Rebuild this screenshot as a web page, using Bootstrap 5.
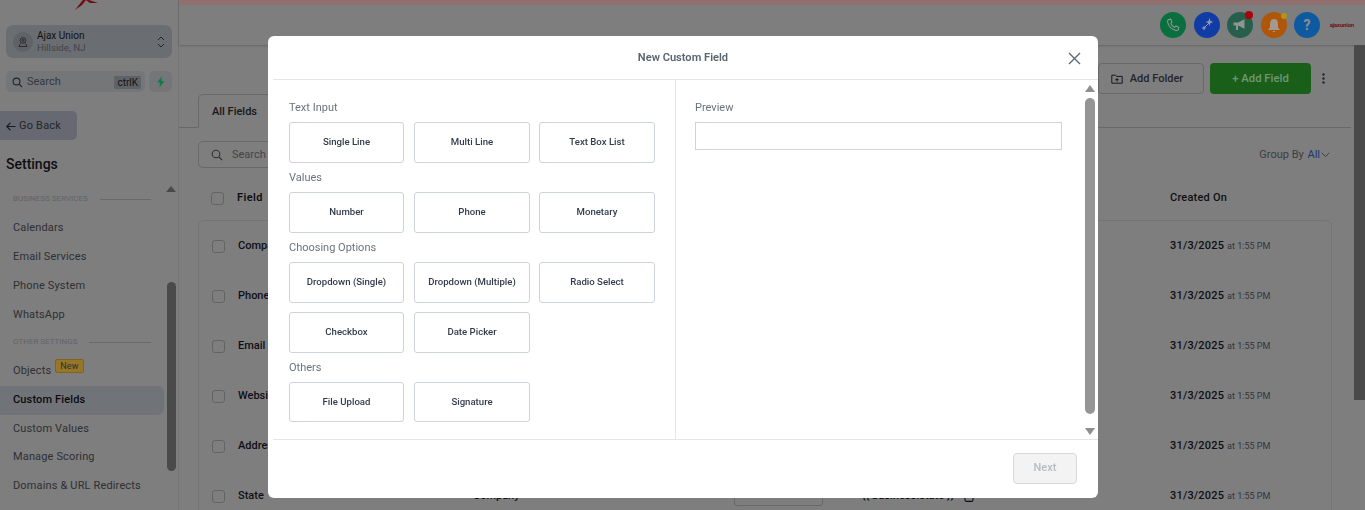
<!DOCTYPE html>
<html lang="en">
<head>
<meta charset="utf-8">
<title>New Custom Field</title>
<link rel="stylesheet" href="https://cdn.jsdelivr.net/npm/bootstrap@5.3.0/dist/css/bootstrap.min.css">
<style>
html,body{height:510px;overflow:hidden}
body{font-family:Roboto,"Liberation Sans",sans-serif;background:#b5b5b5;color:#1c1c22;font-size:11px}
.shell{height:510px;overflow:hidden}
.side{width:179px;flex:none;border-right:1px solid #a8a8a8;padding-top:25px;position:relative;height:510px;overflow:hidden}
.logo-mark{position:absolute;left:74px;top:0}
.org-box{margin:0 6px;height:33px;border-radius:7px;background:#999da3;padding:0 7px}
.org-ava{width:20px;height:20px;border-radius:50%;background:#888d93;flex:none}
.org-name{font-size:10px;line-height:12px;color:#15151a;font-weight:400}
.org-loc{font-size:9.7px;line-height:12px;color:#5f6368}
.find-row{margin:13px 6px 0;gap:4px;height:21px}
.find-box{flex:1;background:#a7aaad;border-radius:5px;padding:1px 4px 0 6px;color:#4e5156;font-size:11px}
.key-hint{background:#888d93;color:#1c1c22;font-size:10px;padding:0 3px;line-height:13px;border-radius:1px}
.bolt-box{width:23px;background:#a7aaad;border-radius:5px}
.back-btn{width:77px;height:29px;margin-top:19px;background:#9397a3;border-radius:0 5px 5px 0;padding:1px 0 0 6px;gap:3px;color:#33353c;font-size:11px;letter-spacing:.2px}
.set-title{font-size:14px;font-weight:500;line-height:18px;margin:15px 0 0 6px;color:#15151a}
.sec-label{font-size:8px;line-height:10px;color:#8b8f98;padding-left:13px;gap:12px;height:10px;margin-right:27px;white-space:nowrap}
.sec-label i{flex:1;height:1px;background:#999}
.sec-one{margin-top:21px;margin-bottom:10px}
.sec-two{margin-top:7px;margin-bottom:10px}
.nav-row{height:29px;padding-left:13px;font-size:11px;color:#43454b;width:164px;border-radius:0 6px 6px 0;white-space:nowrap;letter-spacing:.15px}
.nav-now{background:#a1a6ae;color:#111;font-weight:500}
.nav-snug{margin-top:-1px}
.new-tag{font-size:9px;line-height:12px;background:#d6ab39;border:1px solid #b89028;border-radius:2px;color:#444;padding:0 4px;margin:-12px 0 0 4px}
.bar-thumb{position:absolute;left:167px;top:282px;width:9px;height:189px;border-radius:5px;background:#6b6b6b}
.bar-up{position:absolute;left:166px;top:186px;width:0;height:0;border:5px solid transparent;border-top:0;border-bottom:6px solid #6b6b6b}
.work{flex:1;min-width:0;position:relative;height:510px}
.top-head{height:45px;box-shadow:0 1px 2px rgba(0,0,0,.2);position:relative}
.pink-strip{height:5px;background:#ce9fa0}
.circ-row{gap:7.5px;position:absolute;right:45px;top:12px}
.circ{width:26px;height:26px;border-radius:50%;position:relative}
.circ-g{background:#0e9f5a}.circ-b{background:#1857ec}.circ-t{background:#38896f}.circ-o{background:#fb7b0e}.circ-h{background:#1581e5;color:#ccc;font-weight:700;font-size:14px}
.dot-r,.dot-y{position:absolute;border-radius:50%;width:8px;height:8px;top:-1px;right:0}
.dot-r{background:#f3000e}.dot-y{background:#ffd61d;width:6px;height:6px;top:1px}
.brand-mini{position:absolute;right:11px;top:21px;color:#a01828;font-size:6px;font-weight:700;line-height:8px;letter-spacing:-.2px}
.tool-row{height:83px;margin-right:14px;padding-left:19px;border-bottom:1px solid #959595}
.tab-on{width:73px;height:34px;align-self:flex-end;margin-bottom:-1px;padding-top:3px;border:1px solid #959595;border-bottom-color:#b5b5b5;border-radius:5px 5px 0 0;font-weight:500;font-size:11px;background:#b5b5b5;color:#22242a}
.act-row{margin:18px 21px 0 auto;gap:6px;height:31px}
.act-folder{height:31px;width:106px;border:1px solid #959595;border-radius:4px;font-size:11px;font-weight:500;color:#33353c;gap:7px;padding:1px 8px 0 0}
.act-add{height:31px;width:101px;border-radius:4px;background:#258825;color:#a0d8a8;font-size:11.3px;font-weight:500;padding-top:1px}
.act-more{width:13px;color:#33353c}
.filter-row{padding:13px 35px 0 19px;height:41px}
.seek-box{width:200px;height:27px;border:1px solid #959595;border-radius:5px;color:#5f6368;gap:9px;padding:1px 0 0 12px}
.group-by{color:#55585e;font-size:11px;gap:1px;margin-left:auto}
.group-by b{font-weight:400;color:#2b4fa8}
.head-row{padding:7px 33px 0 32px;height:51px;font-weight:600;font-size:11px;letter-spacing:.4px;color:#16161c}
.head-row .c-date{width:162px}
.tick{width:13px;height:13px;border:1px solid #8f8f8f;border-radius:3px;flex:none}
.head-row .tick{margin:0 13px 0 0}
.rows-card{margin:0 33px 0 19px;border:1px solid #a6a6a6;border-radius:6px 6px 0 0;height:300px}
.body-row{height:50px;padding-left:13px;font-size:11px;font-weight:500;color:#15151f}
.body-row .tick{margin-right:13px}
.c-name{width:235px}
.c-obj{width:261px}
.c-token{width:89px;height:20px;border:1px solid #959595;border-radius:3px}
.c-code{gap:10px;white-space:nowrap;margin-left:39px}
.c-date{font-weight:500;letter-spacing:.2px;margin-left:auto;width:161px;white-space:nowrap}
.c-date small{font-size:9px;font-weight:400;color:#4a4d55;letter-spacing:0}
.page-thumb{position:absolute;right:0;top:45px;width:11px;height:355px;background:#6b6b6b}
.modal-backdrop.veil{opacity:.3;z-index:1050}
.field-modal{position:absolute;left:268px;top:36px;width:830px;height:462px;z-index:1055;border:0;border-radius:6px;overflow:hidden;color:#333c48;background:#fff}
.field-modal .modal-header{height:44px;padding:1px 0 0;margin-left:5px;border-bottom:1px solid #e4e6ea;position:relative;border-radius:0}
.modal-name{font-size:11.1px;font-weight:600;color:#596570;margin-right:5px}
.x-btn{position:absolute;right:17px;top:16px;width:13px;height:13px;line-height:0;background:none;border:0;padding:0}
.split{height:359px;margin-left:5px}
.pane-left{width:403px;flex:none;border-right:1px solid #e4e6ea;padding:21px 20px 0 16px}
.pane-right{flex:1;padding:21px 0 0 19px;position:relative}
.grp-label{font-size:11px;line-height:14px;color:#69737d;margin-bottom:7px}
.type-grid{display:grid;grid-template-columns:115px 116px 115px;gap:9px 10px;margin-bottom:8px}
.type-grid > :nth-child(3n){margin-left:-1px}
.type-btn{height:41px;padding:0;font-size:9.6px;font-weight:500;color:#333c4c;background:#fff;border:1px solid #ced2de;border-radius:3px}
.type-short{height:40px}
.prev-input{display:block;width:367px;height:28px;border:1px solid #ced2de;border-radius:0;padding:0}
.mod-bar{position:absolute;left:409px;top:0;right:0;bottom:0;width:10px}
.mb-up,.mb-dn{position:absolute;left:0;width:0;height:0;border:5px solid transparent}
.mb-up{top:5px;border-top:0;border-bottom:7px solid #8f8f8f}
.mb-dn{bottom:4px;border-bottom:0;border-top:7px solid #8f8f8f}
.mb-thumb{position:absolute;left:0;top:18px;width:10px;height:316px;background:#959595;border-radius:5px}
.field-modal .modal-footer{height:59px;padding:0 21px 1px 0;margin-left:5px;border-top:1px solid #e4e6ea;display:flex;justify-content:flex-end;align-items:center;border-radius:0}
.next-btn{width:64px;height:31px;margin:0;padding:0;font-size:11px;font-weight:500;background:#f3f3f3;border:1px solid #d8d8d8;color:#b8bcc2;border-radius:4px;opacity:1}
.next-btn:disabled{background:#f3f3f3;border-color:#d8d8d8;color:#b8bcc2;opacity:1}
</style>
</head>
<body>
<div class="shell d-flex">
  <aside class="side">
    <svg class="logo-mark" width="26" height="10" viewBox="0 0 26 10"><path d="M1 10 L8 1 L9 0 L12 0 L8 5 Z M12 0 L15 0 L24 3 L16 3 Z" fill="#a0141c"/></svg>
    <div class="org-box d-flex align-items-center gap-1">
      <span class="org-ava d-flex align-items-center justify-content-center"><svg width="12" height="12" viewBox="0 0 12 12" fill="none" stroke="#33353c" stroke-width=".9"><circle cx="6" cy="4.5" r="2.8"/><circle cx="6" cy="4.5" r="1"/><path d="M3.5 7.5 L2 10.5 H10 L8.5 7.5"/></svg></span>
      <div class="flex-grow-1"><div class="org-name">Ajax Union</div><div class="org-loc">Hillside, NJ</div></div>
      <svg width="8" height="14" viewBox="0 0 8 14" fill="none" stroke="#33353c"><path d="M1 5 L4 2 L7 5 M1 9 L4 12 L7 9"/></svg>
    </div>
    <div class="find-row d-flex">
      <div class="find-box d-flex align-items-center gap-1">
        <svg width="11" height="11" viewBox="0 0 11 11" fill="none" stroke="#33353c" stroke-width="1.1"><circle cx="4.5" cy="4.5" r="3.4"/><path d="M7 7 L10.2 10.2"/></svg>
        <span class="flex-grow-1">Search</span><span class="key-hint">ctrlK</span>
      </div>
      <div class="bolt-box d-flex align-items-center justify-content-center"><svg width="9" height="12" viewBox="0 0 8 10"><path d="M5 0 L1 5.5 H3.5 L3 10 L7.5 4 H4.8 Z" fill="#1fae60"/></svg></div>
    </div>
    <div class="back-btn d-flex align-items-center"><svg width="10" height="9" viewBox="0 0 10 9" fill="none" stroke="#22242a" stroke-width="1.1"><path d="M4.5 .6 L.8 4.5 L4.5 8.4 M.8 4.5 H9.5"/></svg>Go Back</div>
    <div class="set-title">Settings</div>
    <div class="sec-label sec-one d-flex align-items-center">BUSINESS SERVICES<i></i></div>
    <div class="nav-row d-flex align-items-center">Calendars</div>
    <div class="nav-row d-flex align-items-center">Email Services</div>
    <div class="nav-row d-flex align-items-center">Phone System</div>
    <div class="nav-row d-flex align-items-center">WhatsApp</div>
    <div class="sec-label sec-two d-flex align-items-center">OTHER SETTINGS<i></i></div>
    <div class="nav-row d-flex align-items-center">Objects<span class="new-tag">New</span></div>
    <div class="nav-row nav-now d-flex align-items-center">Custom Fields</div>
    <div class="nav-row d-flex align-items-center">Custom Values</div>
    <div class="nav-row nav-snug d-flex align-items-center">Manage Scoring</div>
    <div class="nav-row d-flex align-items-center">Domains &amp; URL Redirects</div>
    <div class="bar-up"></div>
    <div class="bar-thumb"></div>
  </aside>
  <main class="work">
    <div class="top-head">
      <div class="pink-strip"></div>
      <div class="circ-row d-flex align-items-center">
        <span class="circ circ-g d-flex align-items-center justify-content-center"><svg width="14" height="14" viewBox="0 0 14 14" fill="none" stroke="#c5d8cd" stroke-width="1.1"><path d="M2.5 1.5 L4.7 1.2 L6 4.2 L4.8 5.5 Q6 8.2 8.6 9.4 L10 8 L12.8 9.5 L12.4 11.6 Q11.4 12.8 9.5 12.4 Q3 10.5 1.6 4 Q1.4 2.3 2.5 1.5 Z"/></svg></span>
        <span class="circ circ-b d-flex align-items-center justify-content-center"><svg width="16" height="16" viewBox="0 0 16 16" fill="#d4dcee"><path d="M10.5 1 L11.5 4 L14.5 5 L11.5 6 L10.5 9 L9.5 6 L6.5 5 L9.5 4 Z M5 8.5 L5.8 10.2 L7.5 11 L5.8 11.8 L5 13.5 L4.2 11.8 L2.5 11 L4.2 10.2 Z"/><path d="M6 10 L10 6" stroke="#d4dcee"/></svg></span>
        <span class="circ circ-t d-flex align-items-center justify-content-center"><svg width="16" height="14" viewBox="0 0 16 14" fill="#ccd6d2"><path d="M1.5 4.5 H6 L12.5 1.2 V10.8 L6 7.5 V12 H4 V7.5 H1.5 Z"/></svg><i class="dot-r"></i></span>
        <span class="circ circ-o d-flex align-items-center justify-content-center"><svg width="14" height="15" viewBox="0 0 14 15" fill="#ecdccd"><path d="M7 1 Q11 1 11 6 V9.5 L13 12 H1 L3 9.5 V6 Q3 1 7 1 Z M5.4 13 H8.6 Q7 15.4 5.4 13 Z"/></svg><i class="dot-y"></i></span>
        <span class="circ circ-h d-flex align-items-center justify-content-center">?</span>
      </div>
      <div class="brand-mini">ajaxunion</div>
    </div>
    <div class="tool-row d-flex">
      <div class="tab-on d-flex align-items-center justify-content-center">All Fields</div>
      <div class="act-row d-flex align-items-center">
        <div class="act-folder d-flex align-items-center justify-content-center">
          <svg width="12" height="10" viewBox="0 0 12 10" fill="none" stroke="#22242a"><path d="M.8 1.2 H4.5 L5.5 2.4 H11.2 V9.2 H.8 Z M6 4 V7.5 M4.3 5.7 H7.7"/></svg>Add Folder</div>
        <div class="act-add d-flex align-items-center justify-content-center">+ Add Field</div>
        <div class="act-more d-flex align-items-center justify-content-center"><svg width="3" height="11" viewBox="0 0 3 11" fill="#33353c"><circle cx="1.5" cy="1.5" r="1.2"/><circle cx="1.5" cy="5.5" r="1.2"/><circle cx="1.5" cy="9.5" r="1.2"/></svg></div>
      </div>
    </div>
    <div class="filter-row d-flex">
      <div class="seek-box d-flex align-items-center"><svg width="12" height="12" viewBox="0 0 12 12" fill="none" stroke="#44464c" stroke-width="1.1"><circle cx="5" cy="5" r="3.8"/><path d="M8 8 L11.2 11.2"/></svg>Search</div>
      <div class="group-by d-flex align-items-center">Group By&nbsp;<b>All</b><svg width="9" height="6" viewBox="0 0 9 6" fill="none" stroke="#55585e"><path d="M.7 .8 L4.5 4.6 L8.3 .8"/></svg></div>
    </div>
    <div class="head-row d-flex align-items-center"><span class="tick"></span><span class="flex-grow-1">Field</span><span class="c-date">Created On</span></div>
    <div class="rows-card">
      <div class="body-row d-flex align-items-center"><span class="tick"></span><span class="c-name">Company</span><span class="c-date">31/3/2025 <small>at 1:55 PM</small></span></div>
      <div class="body-row d-flex align-items-center"><span class="tick"></span><span class="c-name">Phone</span><span class="c-date">31/3/2025 <small>at 1:55 PM</small></span></div>
      <div class="body-row d-flex align-items-center"><span class="tick"></span><span class="c-name">Email</span><span class="c-date">31/3/2025 <small>at 1:55 PM</small></span></div>
      <div class="body-row d-flex align-items-center"><span class="tick"></span><span class="c-name">Website</span><span class="c-date">31/3/2025 <small>at 1:55 PM</small></span></div>
      <div class="body-row d-flex align-items-center"><span class="tick"></span><span class="c-name">Address</span><span class="c-date">31/3/2025 <small>at 1:55 PM</small></span></div>
      <div class="body-row d-flex align-items-center"><span class="tick"></span><span class="c-name">State</span><span class="c-obj">Company</span><span class="c-token"></span><span class="c-code d-flex align-items-center">{{ business.state }}<svg width="10" height="11" viewBox="0 0 10 11" fill="none" stroke="#15151f" stroke-width="1.1"><rect x="1" y="2" width="8" height="8.4" rx="1.5"/><path d="M3 2 V1 H7 V2"/></svg></span><span class="c-date">31/3/2025 <small>at 1:55 PM</small></span></div>
    </div>
    <div class="page-thumb"></div>
  </main>
</div>

<div class="modal-backdrop veil show"></div>
<div class="modal-content field-modal">
  <div class="modal-header justify-content-center">
    <div class="modal-name">New Custom Field</div>
    <button type="button" class="x-btn" aria-label="Close"><svg width="13" height="13" viewBox="0 0 13 13" fill="none" stroke="#5a6a74" stroke-width="1.4"><path d="M1 1 L12 12 M12 1 L1 12"/></svg></button>
  </div>
  <div class="split d-flex">
    <div class="pane-left">
      <div class="grp-label">Text Input</div>
      <div class="type-grid">
        <button class="btn type-btn">Single Line</button><button class="btn type-btn">Multi Line</button><button class="btn type-btn">Text Box List</button>
      </div>
      <div class="grp-label">Values</div>
      <div class="type-grid">
        <button class="btn type-btn">Number</button><button class="btn type-btn">Phone</button><button class="btn type-btn">Monetary</button>
      </div>
      <div class="grp-label">Choosing Options</div>
      <div class="type-grid">
        <button class="btn type-btn">Dropdown (Single)</button><button class="btn type-btn">Dropdown (Multiple)</button><button class="btn type-btn">Radio Select</button>
        <button class="btn type-btn">Checkbox</button><button class="btn type-btn">Date Picker</button>
      </div>
      <div class="grp-label">Others</div>
      <div class="type-grid">
        <button class="btn type-btn type-short">File Upload</button><button class="btn type-btn type-short">Signature</button>
      </div>
    </div>
    <div class="pane-right">
      <div class="grp-label">Preview</div>
      <input class="prev-input" type="text" aria-label="Preview">
      <div class="mod-bar"><i class="mb-up"></i><i class="mb-thumb"></i><i class="mb-dn"></i></div>
    </div>
  </div>
  <div class="modal-footer">
    <button class="btn next-btn" disabled>Next</button>
  </div>
</div>
</body>
</html>
